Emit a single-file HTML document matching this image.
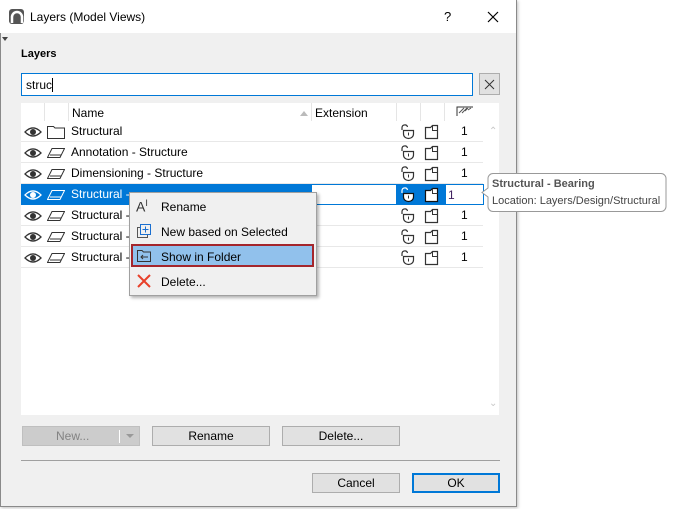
<!DOCTYPE html>
<html><head><style>
*{box-sizing:border-box;margin:0;padding:0}
body{width:675px;height:509px;background:#fff;font-family:"Liberation Sans",sans-serif;font-size:12px;color:#000;position:relative;overflow:hidden}
.a{position:absolute}
.dlg{left:0;top:0;width:517px;height:507px;border:1px solid #8a8a8a;border-top:none;background:#f0f0f0;box-shadow:1px 1px 3px rgba(0,0,0,.25)}
.title{left:0;top:0;width:516px;height:33px;background:#fff}
.row{position:absolute;left:21px;width:462px;height:21px;border-bottom:1px solid #e8e8e8}
.row span.t{position:absolute;left:50px;top:3px}
.btn{position:absolute;height:20px;border:1px solid #adadad;background:#e1e1e1;text-align:center;line-height:18px}
</style></head><body>
<div class="a dlg"></div>
<div class="a title"></div>
<svg class="a" style="left:9px;top:9px" width="16" height="16"><rect x="0" y="0" width="15" height="15" rx="3" fill="#555"/><path d="M3 14 V8 A5 5 0 0 1 13 8 V14" stroke="#fff" stroke-width="2.5" fill="none"/></svg>
<div class="a" style="left:30px;top:10px;font-size:12px">Layers (Model Views)</div>
<div class="a" style="left:444px;top:9px;font-size:13px">?</div>
<svg class="a" style="left:487px;top:11px" width="12" height="12"><path d="M1 1L11 11M11 1L1 11" stroke="#000" stroke-width="1.2"/></svg>
<div class="a" style="left:2px;top:37px;width:0;height:0;border-left:3px solid transparent;border-right:3px solid transparent;border-top:4px solid #444"></div>
<div class="a" style="left:21px;top:48px;font-weight:bold;font-size:11px">Layers</div>
<div class="a" style="left:21px;top:73px;width:452px;height:23px;border:1px solid #0078d7;background:#fff;padding:4px 4px;font-size:12px">struc<span style="border-left:1px solid #000;margin-left:0"></span></div>
<div class="a" style="left:479px;top:73px;width:21px;height:22px;border:1px solid #adadad;background:#e1e1e1"><svg width="19" height="20"><path d="M5 6L14 15M14 6L5 15" stroke="#333" stroke-width="1"/></svg></div>
<div class="a" style="left:21px;top:103px;width:478px;height:312px;background:#fff"></div>
<!-- header -->
<div class="a" style="left:44px;top:103px;width:1px;height:18px;background:#e5e5e5"></div>
<div class="a" style="left:68px;top:103px;width:1px;height:18px;background:#e5e5e5"></div>
<div class="a" style="left:311px;top:103px;width:1px;height:18px;background:#e5e5e5"></div>
<div class="a" style="left:396px;top:103px;width:1px;height:18px;background:#e5e5e5"></div>
<div class="a" style="left:420px;top:103px;width:1px;height:18px;background:#e5e5e5"></div>
<div class="a" style="left:444px;top:103px;width:1px;height:18px;background:#e5e5e5"></div>
<div class="a" style="left:72px;top:106px">Name</div>
<div class="a" style="left:300px;top:111px;width:0;height:0;border-left:4px solid transparent;border-right:4px solid transparent;border-bottom:5px solid #bbb"></div>
<div class="a" style="left:315px;top:106px">Extension</div>
<svg class="a" style="left:456px;top:105px" width="18" height="12"><path d="M1 11V2H17" stroke="#333" fill="none"/><path d="M3 8L8 3M6 8L11 3M9 6L12 3M12 5L15 3" stroke="#555"/></svg>
<!-- selected row backgrounds -->
<div class="a" style="left:21px;top:184px;width:290px;height:21px;background:#0078d7"></div>
<div class="a" style="left:311px;top:184px;width:86px;height:21px;border:1px solid #0078d7;border-right:none;background:#fff"></div>
<div class="a" style="left:396px;top:184px;width:50px;height:21px;background:#0078d7"></div>
<div class="a" style="left:445px;top:184px;width:39px;height:21px;border:1px solid #0078d7;background:#fff;padding:3px 2px;color:#402060">1</div>
<div id="rows"></div>
<script>
var names=["Structural","Annotation - Structure","Dimensioning - Structure","Structural -","Structural -","Structural -","Structural -"];
var h="";
for(var i=0;i<7;i++){var y=121+i*21;var sel=i==3;var c=sel?"#fff":"#000";var st=sel?"#fff":"#333";
h+='<div class="row" style="top:'+y+'px;'+(sel?'border:none':'')+'">';
h+='<svg style="position:absolute;left:3px;top:5px" width="18" height="12"><path d="M1 6Q9 -2 17 6Q9 14 1 6Z" fill="none" stroke="'+st+'" stroke-width="1.3"/><circle cx="9" cy="6" r="3" fill="'+st+'"/></svg>';
if(i==0)h+='<svg style="position:absolute;left:26px;top:3px" width="18" height="15"><path d="M0.5 2.5H6.5L8 4H17.5V14.5H0.5Z" fill="#fff" stroke="#333"/></svg>';
else h+='<svg style="position:absolute;left:26px;top:6px" width="18" height="10"><path d="M5 0.5H17.5L13 9.5H0.5Z" fill="none" stroke="'+st+'"/><path d="M3 7H14" stroke="'+st+'"/></svg>';
h+='<span class="t" style="color:'+c+'">'+names[i]+'</span>';
h+='<svg style="position:absolute;left:379px;top:3px" width="16" height="16"><path d="M2 6V3.5A2.8 2.8 0 0 1 7.5 3" fill="none" stroke="'+st+'" stroke-width="1.2"/><path d="M3.5 6.5H13.5V10A5 4.5 0 0 1 3.5 10Z" fill="#fff" stroke="'+(sel?'#111':'#333')+'" stroke-width="1.2"/><path d="M8.5 8.5V11.5" stroke="#333"/></svg>';
h+='<svg style="position:absolute;left:403px;top:3px" width="16" height="16"><path d="M1.5 3.5H6.5L8.5 1.5H13.5V14.5H1.5Z" fill="#fff" stroke="'+(sel?'#111':'#333')+'" stroke-width="1.2"/><path d="M8.5 1.5V6.5H13.5" fill="none" stroke="#333"/></svg>';
if(!sel)h+='<span style="position:absolute;left:440px;top:3px">1</span>';
h+='</div>';}
document.getElementById("rows").innerHTML=h;
</script>
<div class="a" style="left:489px;top:126px;font-size:10px;color:#c8c8c8">&#8963;</div>
<div class="a" style="left:489px;top:398px;font-size:10px;color:#c8c8c8">&#8964;</div>
<!-- tooltip -->
<svg class="a" style="left:481px;top:172px" width="190" height="42"><path d="M12 1.5H180A5 5 0 0 1 185 6.5V34.5A5 5 0 0 1 180 39.5H12A5 5 0 0 1 7 34.5V25L1 20.5L7 16V6.5A5 5 0 0 1 12 1.5Z" fill="#fff" stroke="#999"/></svg>
<div class="a" style="left:492px;top:178px;font-size:11px;font-weight:bold;color:#555">Structural - Bearing</div>
<div class="a" style="left:492px;top:195px;font-size:11px;color:#444">Location: Layers/Design/Structural</div>
<!-- context menu -->
<div class="a" style="left:129px;top:192px;width:188px;height:104px;background:#f0f0f0;border:1px solid #a0a0a0;box-shadow:2px 2px 3px rgba(0,0,0,.3)"></div>
<div class="a" style="left:131px;top:244px;width:183px;height:23px;border:2px solid #a4262c;background:#91c1ec"></div>
<div class="a" style="left:136px;top:198px;font-size:14px;color:#333">A<sup style="font-size:9px">I</sup></div>
<svg class="a" style="left:136px;top:223px" width="16" height="16"><rect x="1.5" y="4.5" width="10" height="10" fill="none" stroke="#555"/><rect x="4.5" y="1.5" width="10" height="10" fill="#f0f0f0" stroke="#1a6fd0"/><path d="M9.5 3.5V9.5M6.5 6.5H12.5" stroke="#1a6fd0"/></svg>
<svg class="a" style="left:137px;top:249px" width="15" height="14"><path d="M0.5 1.5H5L6.5 3H13.5V12.5H0.5Z" fill="none" stroke="#333"/><path d="M11 8H4M6 6L4 8L6 10" fill="none" stroke="#333"/></svg>
<svg class="a" style="left:137px;top:274px" width="14" height="14"><path d="M1 1L13 13M13 1L1 13" stroke="#e8402a" stroke-width="2"/></svg>
<div class="a" style="left:161px;top:200px">Rename</div>
<div class="a" style="left:161px;top:225px">New based on Selected</div>
<div class="a" style="left:161px;top:250px">Show in Folder</div>
<div class="a" style="left:161px;top:275px">Delete...</div>
<!-- buttons -->
<div class="btn" style="left:22px;top:426px;width:118px;background:#ccc;border-color:#bfbfbf;color:#838383"><span style="position:absolute;left:33px">New...</span><span style="position:absolute;left:96px;top:3px;width:1px;height:13px;background:#fff"></span><span style="position:absolute;left:103px;top:7px;border-left:4px solid transparent;border-right:4px solid transparent;border-top:4px solid #999"></span></div>
<div class="btn" style="left:152px;top:426px;width:118px">Rename</div>
<div class="btn" style="left:282px;top:426px;width:118px">Delete...</div>
<div class="a" style="left:21px;top:460px;width:479px;height:1px;background:#a0a0a0"></div>
<div class="btn" style="left:312px;top:473px;width:88px">Cancel</div>
<div class="btn" style="left:412px;top:473px;width:88px;border:2px solid #0078d7;line-height:16px">OK</div>
</body></html>
